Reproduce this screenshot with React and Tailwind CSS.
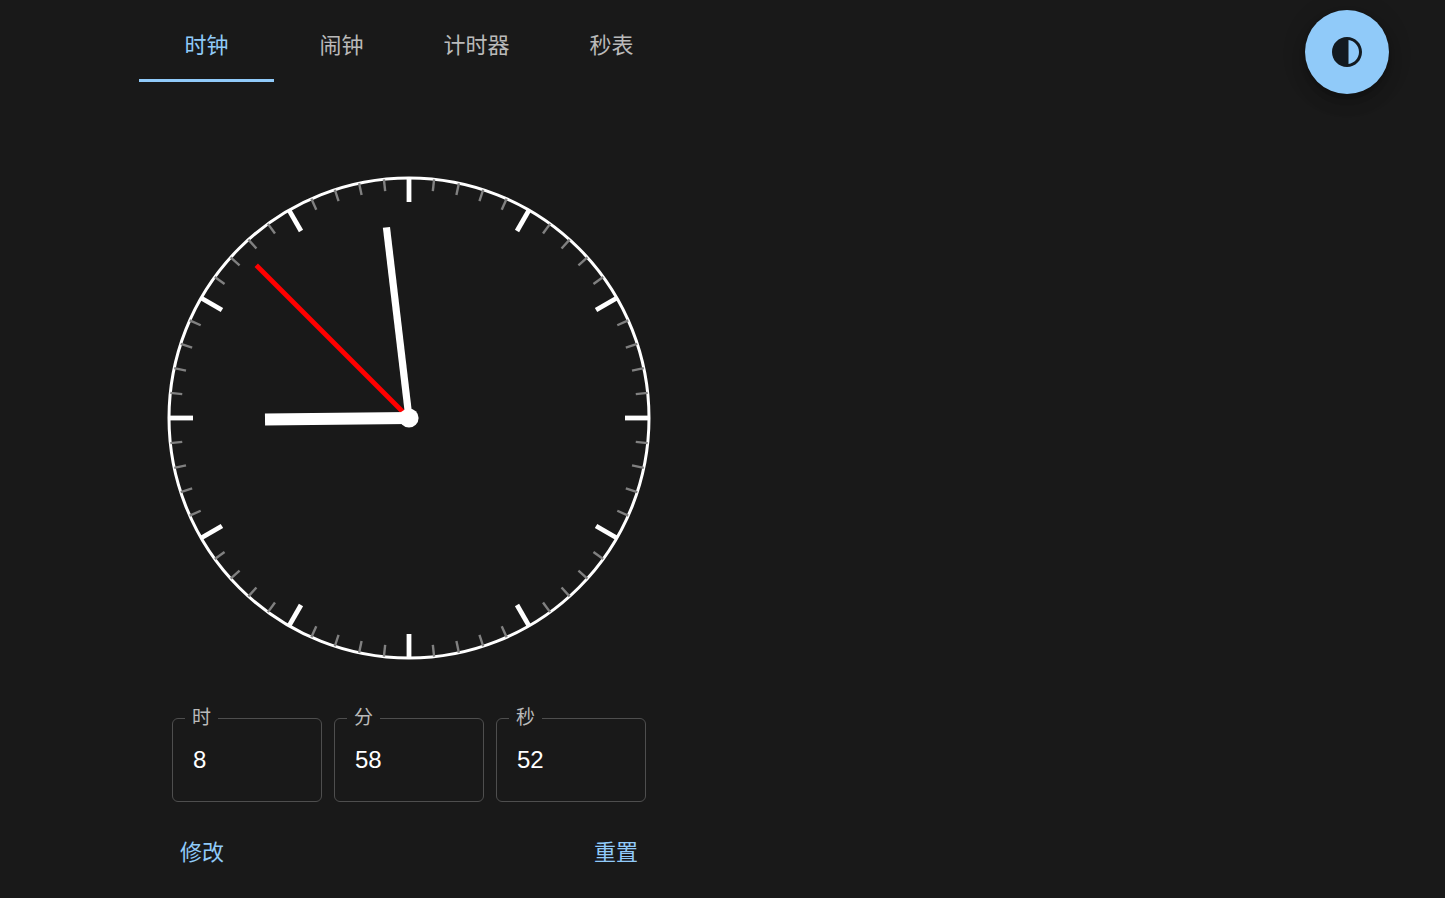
import { useState } from "react";

const TABS = ["时钟", "闹钟", "计时器", "秒表"];
const FIELDS = [
  { id: "hour", label: "时", value: "8" },
  { id: "minute", label: "分", value: "58" },
  { id: "second", label: "秒", value: "52" },
];
const MINUTE_TICKS = Array.from({ length: 60 }, (_, i) => i).filter((i) => i % 5 !== 0);
const HOUR_TICKS = Array.from({ length: 12 }, (_, i) => i);

function ClockFace({ hour, minute, second }) {
  const secondAngle = second * 6;
  const minuteAngle = (minute + second / 60) * 6;
  const hourAngle = ((hour % 12) + minute / 60 + second / 3600) * 30;

  return (
    <svg viewBox="-242 -242 484 484" className="h-[484px] w-[484px]" role="img" aria-label="时钟">
      <circle r="240" fill="none" stroke="#fff" strokeWidth="3" />
      {MINUTE_TICKS.map((i) => (
        <line key={i} y1="-240" y2="-228" stroke="#808080" strokeWidth="2.4" transform={`rotate(${i * 6})`} />
      ))}
      {HOUR_TICKS.map((i) => (
        <line key={i} y1="-240" y2="-216" stroke="#fff" strokeWidth="4.8" transform={`rotate(${i * 30})`} />
      ))}
      <line y2="-216" stroke="#f00" strokeWidth="4.8" transform={`rotate(${secondAngle})`} />
      <line y2="-144" stroke="#fff" strokeWidth="12" transform={`rotate(${hourAngle})`} />
      <line y2="-192" stroke="#fff" strokeWidth="7.2" transform={`rotate(${minuteAngle})`} />
      <circle r="9.6" fill="#fff" />
    </svg>
  );
}

function TimeField({ id, label, value }) {
  return (
    <div className="relative w-[150px]">
      <label
        htmlFor={id}
        className="absolute -top-3 left-[13px] bg-[#191919] px-[7px] text-[19px] leading-6 text-[#bababa]"
      >
        {label}
      </label>
      <input
        id={id}
        defaultValue={value}
        className="h-[84px] w-full rounded-md border border-[#4e4e4e] bg-transparent px-5 text-2xl text-white outline-none focus:border-[#90caf9]"
      />
    </div>
  );
}

function TextButton({ children }) {
  return (
    <button type="button" className="h-[54px] w-24 rounded-md text-[22px] text-[#90caf9] hover:bg-[#90caf9]/10">
      {children}
    </button>
  );
}

export default function App() {
  const [active, setActive] = useState(0);

  return (
    <div className="flex min-h-screen items-start justify-between bg-[#191919] pt-[10px] pr-14 pb-[18px] pl-[139px] font-['Liberation_Sans','Noto_Sans_CJK_SC',sans-serif]">
      <main className="flex w-[540px] flex-col items-center">
        <div role="tablist" className="grid w-full grid-cols-4">
          {TABS.map((name, i) => (
            <button
              key={name}
              type="button"
              role="tab"
              aria-selected={i === active}
              onClick={() => setActive(i)}
              className={
                i === active
                  ? "h-[72px] border-b-3 border-[#90caf9] pt-0.5 text-[22px] text-[#90caf9]"
                  : "h-[72px] border-b-3 border-transparent pt-0.5 text-[22px] text-[#bababa]"
              }
            >
              {name}
            </button>
          ))}
        </div>

        <div className="mt-[94px]">
          <ClockFace hour={8} minute={58} second={52.5} />
        </div>

        <div className="mt-[58px] flex gap-3">
          {FIELDS.map((field) => (
            <TimeField key={field.id} {...field} />
          ))}
        </div>

        <div className="mt-[23px] flex w-full justify-between px-[15px]">
          <TextButton>修改</TextButton>
          <TextButton>重置</TextButton>
        </div>
      </main>

      <button
        type="button"
        aria-label="切换主题"
        className="flex size-[84px] shrink-0 items-center justify-center rounded-full bg-[#90caf9] text-[#131a20] shadow-[0_5px_8px_-2px_rgba(0,0,0,0.2),0_9px_15px_rgba(0,0,0,0.14),0_2px_27px_rgba(0,0,0,0.12)]"
      >
        <svg viewBox="0 0 24 24" className="size-9" fill="currentColor" aria-hidden="true">
          <path d="M12 22c5.52 0 10-4.48 10-10S17.52 2 12 2 2 6.48 2 12s4.48 10 10 10zm1-17.93c3.94.49 7 3.85 7 7.93s-3.05 7.44-7 7.93V4.07z" />
        </svg>
      </button>
    </div>
  );
}
